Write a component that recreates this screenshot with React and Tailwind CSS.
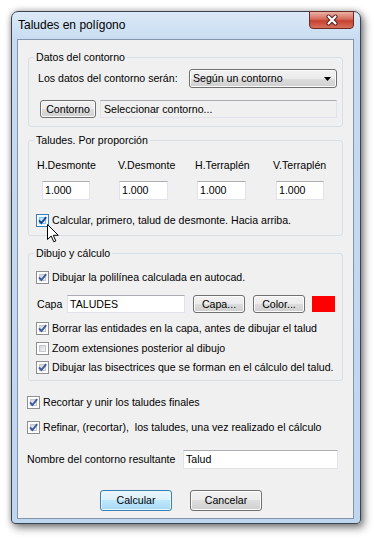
import React from "react";

const btn =
  "flex items-center justify-center rounded-[3px] border border-[#707070] bg-[linear-gradient(to_bottom,#f2f2f2_0%,#ebebeb_50%,#dddddd_50%,#cfcfcf_100%)] shadow-[inset_0_0_0_1px_#fcfcfc]";
const btnDefault =
  "flex items-center justify-center rounded-[3px] border border-[#3c7fb1] bg-[linear-gradient(to_bottom,#eaf6fd_0%,#d9f0fc_50%,#bee6fd_50%,#a7d9f5_100%)] shadow-[inset_0_0_0_1px_#e8f6fd]";
const field =
  "flex items-center border border-[#e2e3ea] border-t-[#abadb3] bg-white px-[2px]";

const Check = ({ checked, hover }) => (
  <span
    className={
      hover
        ? "relative flex h-[13px] w-[13px] shrink-0 border border-[#3c7fb1] bg-[#f4fbff] p-[2px]"
        : "relative flex h-[13px] w-[13px] shrink-0 border border-[#8e8f8f] bg-white p-[2px]"
    }
  >
    <span
      className={
        hover
          ? "h-full w-full border border-[#79c6f9] bg-[linear-gradient(135deg,#b1dffd,#e9f7fe)]"
          : "h-full w-full border border-[#c3c6ca] bg-[linear-gradient(135deg,#d3d5d8,#f7f7f7)]"
      }
    />
    {checked && (
      <svg className="absolute left-0 top-0" width="11" height="11" viewBox="0 0 11 11">
        <path d="M2 5.4L4.4 8L9.2 2.2" fill="none" stroke={hover ? "#1c3f94" : "#3b5aa3"} strokeWidth="1.9" />
      </svg>
    )}
  </span>
);

const CheckRow = ({ checked, hover, children, className }) => (
  <div className={className}>
    <Check checked={checked} hover={hover} />
    <span className="ml-[3px]">{children}</span>
  </div>
);

const Cursor = () => (
  <svg className="absolute left-[11px] top-[10px]" width="12" height="19" viewBox="0 0 12 19">
    <path
      d="M0.5 0.5V15.5L4.2 12L6.8 17.8L8.8 16.9L6.3 11.3H11.3Z"
      fill="#fff"
      stroke="#000"
      strokeWidth="1"
      strokeLinejoin="miter"
    />
  </svg>
);

const columns = [
  { label: "H.Desmonte", col: "w-[81px]", input: "ml-[5px] w-[48px]" },
  { label: "V.Desmonte", col: "w-[77px]", input: "ml-[1px] w-[49px]" },
  { label: "H.Terraplén", col: "w-[78px]", input: "ml-[2px] w-[49px]" },
  { label: "V.Terraplén", col: "w-[60px]", input: "ml-[3px] w-[48px]" },
];

export default function App() {
  return (
    <div className="h-[539px] w-[374px] overflow-hidden bg-white pl-[11px] pt-[11px] font-['Liberation_Sans',Arial,sans-serif] text-[10.6px] leading-[13px] text-black">
      <div className="relative flex h-[513px] w-[350px] flex-col rounded-t-[7px] rounded-b-[4px] border border-[#3b4350] bg-[linear-gradient(to_bottom,#dce9f7,#c6dbf1_30px,#bfd6ef)] shadow-[0_0_6px_rgba(0,0,0,0.3),3px_4px_9px_rgba(0,0,0,0.45)]">
        <div className="flex h-[27px] items-center pl-[6px] text-[12px]">Taludes en polígono</div>
        <div className="absolute right-[6px] top-[-1px] flex h-[18px] w-[45px] items-center justify-center rounded-b-[4px] border border-[#6b2a24] bg-[linear-gradient(to_bottom,#eab2a6,#d66a5b_45%,#c5412f_55%,#d7705c)]">
          <svg width="14" height="12" viewBox="0 0 14 12">
            <path d="M3.5 2.5L10.5 9.5M10.5 2.5L3.5 9.5" stroke="#4a1d18" strokeWidth="4" strokeLinecap="round" />
            <path d="M3.5 2.5L10.5 9.5M10.5 2.5L3.5 9.5" stroke="#fff" strokeWidth="2.2" strokeLinecap="round" />
          </svg>
        </div>

        <div className="mb-[4px] ml-[5px] mr-[6px] flex flex-1 flex-col border border-[#8394ab] bg-[#f0f0f0] px-[10px] pt-[11px]">
          <fieldset className="rounded-[3px] border border-[#d5dfe5]">
            <legend className="ml-[5px] px-[2px]">Datos del contorno</legend>
            <div className="flex h-[19px] items-center pl-[9px] mt-[5px]">
              <span className="w-[151px]">Los datos del contorno serán:</span>
              <div className={btn + " !justify-between h-[19px] w-[148px] pl-[3px] pr-[5px]"}>
                <span>Según un contorno</span>
                <svg width="7" height="4" viewBox="0 0 7 4">
                  <path d="M0 0H7L3.5 4Z" fill="#000" />
                </svg>
              </div>
            </div>
            <div className="mb-[8px] mt-[12px] flex h-[18px] pl-[11px]">
              <div className={btn + " w-[56px]"}>Contorno</div>
              <div className="ml-[4px] flex w-[237px] items-center border border-[#e2e3ea] border-t-[#abadb3] bg-[#f0f0f0] px-[3px]">
                Seleccionar contorno...
              </div>
            </div>
          </fieldset>

          <fieldset className="mt-[7px] rounded-[3px] border border-[#d5dfe5]">
            <legend className="ml-[5px] px-[2px]">Taludes. Por proporción</legend>
            <div className="mt-[12px] flex pl-[8px]">
              {columns.map((c) => (
                <div key={c.label} className={c.col + " flex flex-col"}>
                  <span>{c.label}</span>
                  <div className={field + " mt-[9px] h-[19px] " + c.input}>1.000</div>
                </div>
              ))}
            </div>
            <div className="mb-[7px] mt-[13px] flex h-[15px] items-center pl-[7px]">
              <div className="relative">
                <Check checked hover />
                <Cursor />
              </div>
              <span className="ml-[3px]">Calcular, primero, talud de desmonte. Hacia arriba.</span>
            </div>
          </fieldset>

          <fieldset className="mt-[11px] rounded-[3px] border border-[#d5dfe5]">
            <legend className="ml-[5px] px-[2px]">Dibujo y cálculo</legend>
            <CheckRow checked className="mt-[10px] flex h-[15px] items-center pl-[7px]">
              Dibujar la polilínea calculada en autocad.
            </CheckRow>
            <div className="mt-[10px] flex h-[18px] items-center pl-[8px]">
              <span className="w-[30px]">Capa</span>
              <div className={field + " h-[18px] w-[118px]"}>TALUDES</div>
              <div className={btn + " ml-[8px] h-[18px] w-[52px]"}>Capa...</div>
              <div className={btn + " ml-[8px] h-[18px] w-[52px]"}>Color...</div>
              <div className="ml-[7px] h-[16px] w-[23px] bg-[#ff0000]" />
            </div>
            <CheckRow checked className="mt-[8px] flex h-[15px] items-center pl-[7px]">
              Borrar las entidades en la capa, antes de dibujar el talud
            </CheckRow>
            <CheckRow className="mt-[5px] flex h-[15px] items-center pl-[7px]">
              Zoom extensiones posterior al dibujo
            </CheckRow>
            <CheckRow checked className="mb-[5px] mt-[4px] flex h-[15px] items-center pl-[7px]">
              Dibujar las bisectrices que se forman en el cálculo del talud.
            </CheckRow>
          </fieldset>

          <CheckRow checked className="-ml-[1px] mt-[14px] flex h-[15px] items-center">
            Recortar y unir los taludes finales
          </CheckRow>
          <CheckRow checked className="-ml-[1px] mt-[10px] flex h-[15px] items-center">
            Refinar, (recortar),&nbsp; los taludes, una vez realizado el cálculo
          </CheckRow>

          <div className="-ml-[1px] mt-[15px] flex h-[19px] items-center">
            <span className="w-[156px]">Nombre del contorno resultante</span>
            <div className={field + " h-[19px] w-[155px]"}>Talud</div>
          </div>

          <div className="ml-[72px] mt-[21px] flex gap-[18px]">
            <div className={btnDefault + " h-[21px] w-[72px]"}>Calcular</div>
            <div className={btn + " h-[21px] w-[72px]"}>Cancelar</div>
          </div>
        </div>
      </div>
    </div>
  );
}
